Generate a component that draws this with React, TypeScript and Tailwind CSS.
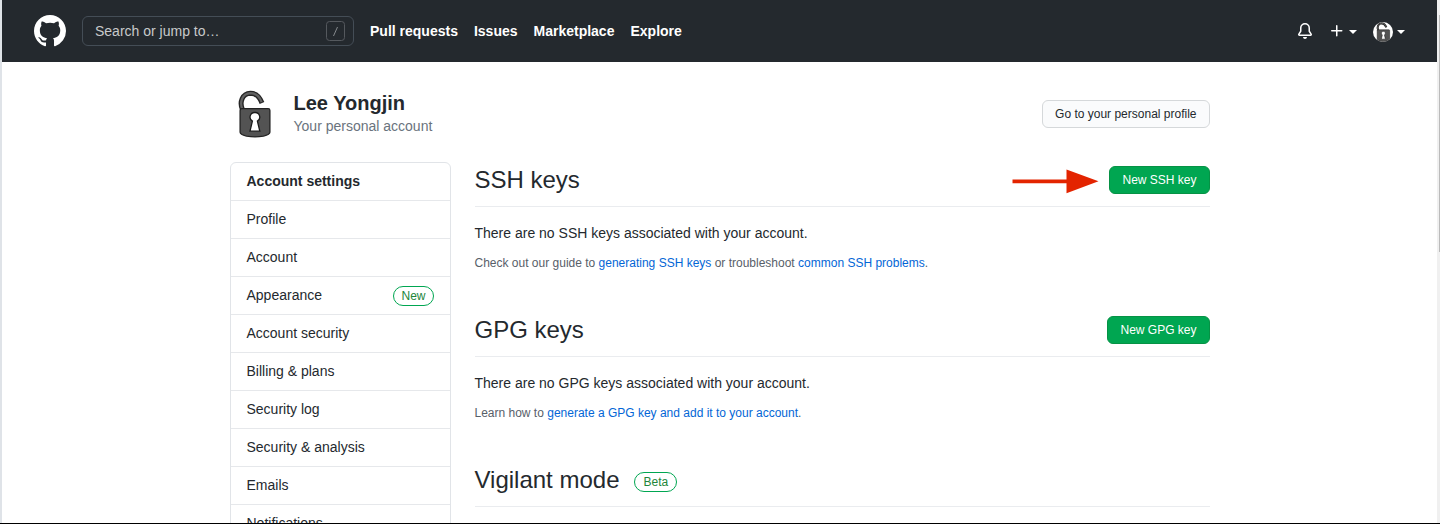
import React from 'react';

const MENU = [
  'Profile',
  'Account',
  'Appearance',
  'Account security',
  'Billing & plans',
  'Security log',
  'Security & analysis',
  'Emails',
  'Notifications',
];

function Mark() {
  return (
    <svg width="32" height="32" viewBox="0 0 16 16" fill="currentColor" className="shrink-0">
      <path
        fillRule="evenodd"
        d="M8 0C3.58 0 0 3.58 0 8c0 3.54 2.29 6.53 5.47 7.59.4.07.55-.17.55-.38 0-.19-.01-.82-.01-1.49-2.01.37-2.53-.49-2.69-.94-.09-.23-.48-.94-.82-1.13-.28-.15-.68-.52-.01-.53.63-.01 1.08.58 1.23.82.72 1.21 1.87.87 2.33.66.07-.52.28-.87.51-1.07-1.78-.2-3.64-.89-3.64-3.95 0-.87.31-1.59.82-2.15-.08-.2-.36-1.02.08-2.12 0 0 .67-.21 2.2.82.64-.18 1.32-.27 2-.27.68 0 1.36.09 2 .27 1.53-1.04 2.2-.82 2.2-.82.44 1.1.16 1.92.08 2.12.51.56.82 1.27.82 2.15 0 3.07-1.87 3.75-3.65 3.95.29.25.54.73.54 1.48 0 1.07-.01 1.93-.01 2.2 0 .21.15.46.55.38A8.013 8.013 0 0016 8c0-4.42-3.58-8-8-8z"
      />
    </svg>
  );
}

function Bell() {
  return (
    <svg width="16" height="16" viewBox="0 0 16 16" fill="currentColor">
      <path d="M8 16a2 2 0 001.985-1.75c.017-.137-.097-.25-.235-.25h-3.5c-.138 0-.252.113-.235.25A2 2 0 008 16z" />
      <path
        fillRule="evenodd"
        d="M8 1.5A3.5 3.5 0 004.5 5v2.947c0 .346-.102.683-.294.97l-1.703 2.556a.018.018 0 00-.003.01l.001.006c0 .002.002.004.004.006a.017.017 0 00.006.004l.007.001h10.964l.007-.001a.016.016 0 00.006-.004.016.016 0 00.004-.006l.001-.007a.017.017 0 00-.003-.01l-1.703-2.554a1.75 1.75 0 01-.294-.97V5A3.5 3.5 0 008 1.5zM3 5a5 5 0 0110 0v2.947c0 .05.015.098.042.139l1.703 2.555A1.518 1.518 0 0113.482 13H2.518a1.518 1.518 0 01-1.263-2.36l1.703-2.554A.25.25 0 003 7.947V5z"
      />
    </svg>
  );
}

function Plus() {
  return (
    <svg width="16" height="16" viewBox="0 0 16 16" fill="currentColor">
      <path d="M7.75 2a.75.75 0 01.75.75V7h4.25a.75.75 0 110 1.5H8.5v4.25a.75.75 0 11-1.5 0V8.5H2.75a.75.75 0 010-1.5H7V2.75A.75.75 0 017.75 2z" />
    </svg>
  );
}

function Caret() {
  return (
    <svg width="8" height="4" viewBox="0 0 8 4" fill="currentColor" className="mt-[2px]">
      <path d="M0 0h8L4 4z" />
    </svg>
  );
}

function Padlock({ size }: { size: number }) {
  return (
    <svg width={size} height={size} viewBox="0 0 48 48">
      <rect width="48" height="48" fill="#fff" />
      <path d="M12.6 20C9 12 12.300 3.500 20.500 3.200c6 0 9.300 4 11.500 9.800" fill="none" stroke="#252525" strokeWidth="5" />
      <path d="M12.600 20C9 12 12.300 3.500 20.500 3.200c6 0 9.300 4 11.100 8.900" fill="none" stroke="#626262" strokeWidth="2.200" />
      <path
        d="M11.800 18.700h26.400q1.700 0 1.700 1.700V42.200q0 2.200-6.400 3.900-8.500 1.600-17 0-6.400-1.700-6.400-3.900V20.400q0-1.700 1.700-1.700z"
        fill="#535353"
        stroke="#222"
        strokeWidth="1.300"
      />
      <path
        d="M24.900 22.500a4.600 4.600 0 0 1 2.500 8.600L29.800 41.200H20L22.400 31.100a4.600 4.600 0 0 1 2.500-8.600z"
        fill="#fff"
        stroke="#1b1b1b"
        strokeWidth="1.300"
      />
    </svg>
  );
}

function Arrow() {
  return (
    <svg width="87" height="25" viewBox="0 0 87 25" fill="#e32400">
      <path d="M0.500 10.400h54V0.400L86.500 12.300 54.500 24.300V14.200H0.500z" />
    </svg>
  );
}

function Pill({ children, roomy }: { children: React.ReactNode; roomy?: boolean }) {
  return (
    <span
      className={`h-5 rounded-full border border-[#00a651] text-xs leading-[18px] text-[#22863a] ${roomy ? 'px-2' : 'px-[7px]'}`}
    >
      {children}
    </span>
  );
}

function GreenButton({ children }: { children: React.ReactNode }) {
  return (
    <button className="h-7 rounded-md border border-[#069245] bg-[#00a651] px-3 text-xs leading-5 text-white">
      {children}
    </button>
  );
}

function SectionHead({ title, children }: { title: string; children?: React.ReactNode }) {
  return (
    <div className="flex h-[45px] items-start justify-between border-b border-[#eaecef]">
      <h2 className="text-2xl leading-9">{title}</h2>
      {children}
    </div>
  );
}

function Header() {
  return (
    <header className="flex h-[62px] shrink-0 items-center bg-[#24292e] px-8 text-white">
      <Mark />
      <div className="ml-4 flex h-[30px] w-[272px] items-center justify-between rounded-md border border-[#444d56] pl-3 pr-2">
        <span className="text-sm text-[#c8c9cb]">Search or jump to…</span>
        <svg width="19" height="20" viewBox="0 0 19 20" fill="none" stroke="#55595e">
          <rect x="0.500" y="0.500" width="18" height="19" rx="3" />
          <path d="M11.500 6 7.500 15" stroke="#85898d" />
        </svg>
      </div>
      <nav className="ml-4 flex gap-4 text-sm font-bold">
        <a>Pull requests</a>
        <a>Issues</a>
        <a>Marketplace</a>
        <a>Explore</a>
      </nav>
      <div className="ml-auto flex items-center">
        <Bell />
        <div className="ml-4 flex items-center gap-1">
          <Plus />
          <Caret />
        </div>
        <div className="ml-4 flex items-center gap-1">
          <div className="mt-[2px] overflow-hidden rounded-full">
            <Padlock size={20} />
          </div>
          <Caret />
        </div>
      </div>
    </header>
  );
}

export default function App() {
  return (
    <div className="flex h-[524px] flex-col overflow-hidden border-b border-black bg-white font-['Liberation_Sans',Arial,sans-serif] text-[#24292e]">
      <div className="flex min-h-0 flex-1">
        <div className="w-[2px] shrink-0 bg-[#dfe3e8]" />
        <div className="flex min-w-0 flex-1 flex-col">
          <Header />
          <main className="mx-auto flex min-h-0 w-[980px] flex-1 flex-col overflow-hidden pt-7">
            <div className="flex h-12 shrink-0 items-center">
              <Padlock size={48} />
              <div className="ml-4 flex-1">
                <h1 className="text-xl leading-[25px] font-bold">Lee Yongjin</h1>
                <p className="text-sm leading-[21px] text-[#6a737d]">Your personal account</p>
              </div>
              <button className="h-7 rounded-md border border-[#d5d8da] bg-[#fafbfc] px-3 text-xs leading-5">
                Go to your personal profile
              </button>
            </div>
            <div className="mt-6 flex min-h-0 flex-1 items-start">
              <nav className="mr-6 w-[221px] shrink-0 rounded-md border border-[#e1e4e8] text-sm leading-[21px]">
                <h2 className="h-[37px] px-4 py-2 font-bold">Account settings</h2>
                {MENU.map((item) => (
                  <a key={item} className="flex h-[38px] justify-between border-t border-[#e6e8eb] px-4 py-2">
                    {item}
                    {item === 'Appearance' && (
                      <span className="flex pt-px">
                        <Pill>New</Pill>
                      </span>
                    )}
                  </a>
                ))}
              </nav>
              <div className="min-w-0 flex-1">
                <section className="h-[150px]">
                  <SectionHead title="SSH keys">
                    <div className="flex items-start gap-[10px] pt-1">
                      <span className="pt-[3px]">
                        <Arrow />
                      </span>
                      <GreenButton>New SSH key</GreenButton>
                    </div>
                  </SectionHead>
                  <p className="mt-4 text-sm leading-[21px]">There are no SSH keys associated with your account.</p>
                  <p className="mt-[10px] text-xs leading-[18px] text-[#586069]">
                    Check out our guide to <a className="text-[#0366d6]">generating SSH keys</a> or troubleshoot{' '}
                    <a className="text-[#0366d6]">common SSH problems</a>.
                  </p>
                </section>
                <section className="h-[150px]">
                  <SectionHead title="GPG keys">
                    <div className="flex pt-1">
                      <GreenButton>New GPG key</GreenButton>
                    </div>
                  </SectionHead>
                  <p className="mt-4 text-sm leading-[21px]">There are no GPG keys associated with your account.</p>
                  <p className="mt-[10px] text-xs leading-[18px] text-[#586069]">
                    Learn how to <a className="text-[#0366d6]">generate a GPG key and add it to your account</a>.
                  </p>
                </section>
                <section>
                  <div className="flex h-[45px] items-start gap-[15px] border-b border-[#eaecef]">
                    <h2 className="text-2xl leading-9">Vigilant mode</h2>
                    <span className="flex pt-[10px]">
                      <Pill roomy>Beta</Pill>
                    </span>
                  </div>
                </section>
              </div>
            </div>
          </main>
        </div>
        <div className="flex w-[3px] shrink-0 justify-end bg-[#f0f0f0] pt-[15px]">
          <div className="h-[237px] w-px bg-[#bbbbbb]" />
        </div>
      </div>
    </div>
  );
}
